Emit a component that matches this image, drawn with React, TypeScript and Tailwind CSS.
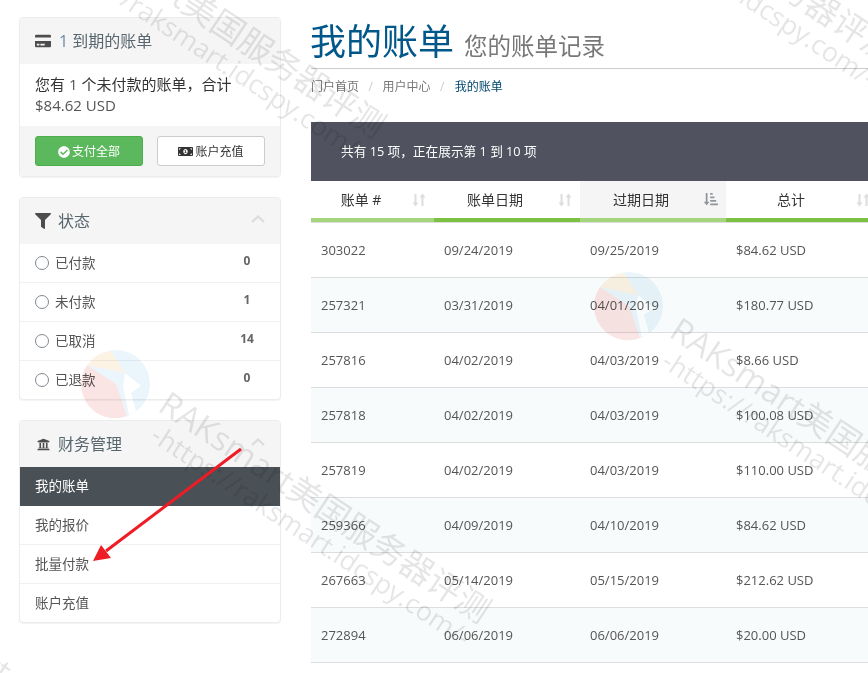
import { FaCreditCard, FaFilter, FaUniversity, FaCheckCircle, FaMoneyBillAlt, FaSortAmountDownAlt } from "react-icons/fa";

const font = "font-['Open_Sans','Noto_Sans_CJK_SC',sans-serif]";

function Chevron() {
  return (
    <svg width="14" height="8" viewBox="0 0 14 8" fill="none" stroke="#dcdcdc" strokeWidth="2.2">
      <path d="M1 7 L7 1.5 L13 7" />
    </svg>
  );
}

function SortIdle() {
  return (
    <svg width="14" height="14" viewBox="0 0 14 14" fill="#dddddd">
      <path d="M2.500 1h2v8.500h2L3.500 13.500 0.500 9.500h2z" />
      <path d="M9.500 13h2V4.500h2L10.500 .5 7.500 4.500h2z" />
    </svg>
  );
}

function Heading({ icon, title, chevron }: { icon: React.ReactNode; title: React.ReactNode; chevron?: boolean }) {
  return (
    <div className="flex items-center h-[46px] bg-[#f5f5f5] pl-[15px] pr-[15px] rounded-t-[3px]">
      <span className="w-[16px] flex justify-center text-[#4d4d4d] text-[16px] mr-[7px]">{icon}</span>
      <span className="text-[16px] text-[#58666e]">{title}</span>
      {chevron && <span className="ml-auto mb-[4px] flex"><Chevron /></span>}
    </div>
  );
}

function StatusRow({ label, count, last }: { label: string; count: string; last?: boolean }) {
  return (
    <div className={`flex items-center pl-[15px] text-[13.500px] text-[#555] ${last ? "h-[38px]" : "h-[39px] border-b border-[#f1f1f1]"}`}>
      <span className="w-[14px] h-[14px] rounded-full border-[1.500px] border-[#808890] mr-[6px]" />
      <span>{label}</span>
      <span className="ml-auto w-[56px] mb-[5px] pr-[10px] text-[12px] font-bold text-[#666] text-center">{count}</span>
    </div>
  );
}

const rows = [
  ["303022", "09/24/2019", "09/25/2019", "$84.62 USD"],
  ["257321", "03/31/2019", "04/01/2019", "$180.77 USD"],
  ["257816", "04/02/2019", "04/03/2019", "$8.66 USD"],
  ["257818", "04/02/2019", "04/03/2019", "$100.08 USD"],
  ["257819", "04/02/2019", "04/03/2019", "$110.00 USD"],
  ["259366", "04/09/2019", "04/10/2019", "$84.62 USD"],
  ["267663", "05/14/2019", "05/15/2019", "$212.62 USD"],
  ["272894", "06/06/2019", "06/06/2019", "$20.00 USD"],
];

function Logo({ className }: { className: string }) {
  return (
    <svg className={className} width="70" height="70" viewBox="0 0 70 70">
      <circle cx="35" cy="35" r="34" fill="#e9f5fc" />
      <path d="M35 35 L6 16 A34 34 0 0 0 46 67 Z" fill="#fbe3e1" />
      <path d="M6 16 A34 34 0 0 1 30 2 L44 24 Z" fill="#fdf2e1" />
      <path d="M44 24 L60 37 L50 44 L55 62 A34 34 0 0 1 48 66 L42 38 Z" fill="#ffffff" />
    </svg>
  );
}

function Mark({ x, y, top, bottom }: { x: number; y: number; top: string; bottom?: string }) {
  return (
    <div
      className="absolute origin-top-left rotate-[33.500deg] whitespace-nowrap pointer-events-none text-[#000]/10"
      style={{ left: x, top: y }}
    >
      <div className="text-[33.500px] leading-[34px] font-['Open_Sans','Noto_Sans_CJK_SC',sans-serif]">{top}</div>
      {bottom && <div className="text-[26.700px] leading-[30px] font-['Open_Sans',sans-serif] ml-[10px]">{bottom}</div>}
    </div>
  );
}

const wmTop = "RAKsmart美国服务器评测";
const wmBottom = "-https://raksmart.idcspy.com/-";

const cell = "border-b border-[#ddd] pl-[10px] pt-[2px]";

export default function App() {
  return (
    <div className={`relative w-[868px] h-[673px] overflow-hidden bg-white flex pl-[19px] pt-[17px] ${font}`}>
      <aside className="w-[262px] shrink-0 mr-[30px] flex flex-col gap-[20px]">
        <section className="border border-[#ececec] rounded-[4px] shadow-[0_1px_1px_rgba(0,0,0,0.05)] h-[160px] flex flex-col">
          <Heading icon={<FaCreditCard />} title={<><span className="ml-[1px] text-[#6a8ba5]">1</span> 到期的账单</>} />
          <div className="px-[15px] pt-[10px] h-[62px] bg-white text-[15px] leading-[21px] text-[#333]">
            您有 <span className="text-[#555]">1</span> 个未付款的账单，合计<br />
            <span className="text-[#555]">$84.62 USD</span>
          </div>
          <div className="flex-1 bg-[#f5f5f5] px-[15px] flex justify-between pt-[10px] rounded-b-[4px]">
            <button className="w-[108px] h-[30px] pt-[1px] rounded-[3px] bg-[#5cb85c] border border-[#4cae4c] text-white text-[12px] flex items-center justify-center gap-[2px]">
              <FaCheckCircle className="text-[12px]" />支付全部
            </button>
            <button className="w-[108px] h-[30px] pt-[1px] rounded-[3px] bg-white border border-[#ccc] text-[#333] text-[12px] flex items-center justify-center gap-[2px]">
              <FaMoneyBillAlt className="text-[15px]" />账户充值
            </button>
          </div>
        </section>

        <section className="border border-[#ececec] rounded-[4px] shadow-[0_1px_1px_rgba(0,0,0,0.05)] bg-white">
          <Heading icon={<FaFilter />} title="状态" chevron />
          <StatusRow label="已付款" count="0" />
          <StatusRow label="未付款" count="1" />
          <StatusRow label="已取消" count="14" />
          <StatusRow label="已退款" count="0" last />
        </section>

        <section className="border border-[#ececec] rounded-[4px] shadow-[0_1px_1px_rgba(0,0,0,0.05)] bg-white">
          <Heading icon={<FaUniversity className="text-[13px]" />} title="财务管理" chevron />
          <div className="h-[39px] flex items-center px-[15px] pb-[1px] bg-[#4a5156] text-white text-[13.500px]">我的账单</div>
          <div className="h-[39px] flex items-center px-[15px] border-b border-[#f1f1f1] text-[#555] text-[13.500px]">我的报价</div>
          <div className="h-[39px] flex items-center px-[15px] border-b border-[#f1f1f1] text-[#555] text-[13.500px]">批量付款</div>
          <div className="h-[38px] flex items-center px-[15px] text-[#555] text-[13.500px]">账户充值</div>
        </section>
      </aside>

      <main className="w-[600px] shrink-0">
        <div className="h-[51px] border-b border-[#ccc] flex items-baseline box-content">
          <h1 className="text-[36px] leading-[50px] text-[#00588a] -ml-[1px]">我的账单</h1>
          <span className="ml-[10px] text-[23.500px] text-[#777]">您的账单记录</span>
        </div>
        <div className="flex items-center h-[36px] text-[12px] text-[#777]">
          <span>门户首页</span>
          <span className="mx-[9.500px] text-[#ccc]">/</span>
          <span>用户中心</span>
          <span className="mx-[9.500px] text-[#ccc]">/</span>
          <span className="ml-[1px] text-[#00466e]">我的账单</span>
        </div>
        <div className="mt-[17px] h-[59px] bg-[#50535f] flex items-center pl-[30px] text-[12.700px] text-white">
          共有 15 项，正在展示第 1 到 10 项
        </div>
        <table className="table-fixed w-[567px] border-separate border-spacing-0">
          <colgroup>
            <col className="w-[123px]" />
            <col className="w-[146px]" />
            <col className="w-[146px]" />
            <col className="w-[152px]" />
          </colgroup>
          <thead>
            <tr className="text-[14px] text-[#333] font-normal">
              <th className="relative h-[41px] font-normal border-b-4 border-[#a5d57d] pr-[23px]">
                账单 #<span className="absolute right-[8px] top-[12px] flex"><SortIdle /></span>
              </th>
              <th className="relative font-normal border-b-4 border-[#7cc142] pr-[24px]">
                账单日期<span className="absolute right-[8px] top-[12px] flex"><SortIdle /></span>
              </th>
              <th className="relative font-normal bg-[#f5f5f5] border-b-4 border-[#a5d57d] pr-[24px]">
                过期日期<span className="absolute right-[8px] top-[11px] text-[#8f959b] text-[14px] flex"><FaSortAmountDownAlt /></span>
              </th>
              <th className="relative font-normal border-b-4 border-[#7cc142] pr-[22px]">
                总计<span className="absolute right-[8px] top-[12px] flex"><SortIdle /></span>
              </th>
            </tr>
            <tr>
              <td colSpan={4} className="h-[1px] p-0 bg-[#ddd]" />
            </tr>
          </thead>
          <tbody>
            {rows.map((r, i) => (
              <tr key={r[0]} className={`h-[55px] text-[13px] text-[#555] ${i % 2 ? "bg-[#f8fbfb]" : "bg-white"}`}>
                {r.map((c, j) => (
                  <td key={j} className={cell}>{c}</td>
                ))}
              </tr>
            ))}
          </tbody>
        </table>
      </main>

      <Logo className="absolute left-[81px] top-[349px] pointer-events-none opacity-90 mix-blend-multiply" />
      <Logo className="absolute left-[594px] top-[271px] pointer-events-none opacity-90 mix-blend-multiply" />
      <Mark x={173} y={385} top={wmTop} bottom={wmBottom} />
      <Mark x={684} y={311} top={wmTop} bottom={wmBottom} />
      <Mark x={68} y={-100} top={wmTop} bottom={wmBottom} />
      <Mark x={579} y={-174} top={wmTop} bottom={wmBottom} />
      <Mark x={-110} y={575} top="RAKsmart" />

      <svg className="absolute left-0 top-0 pointer-events-none" width="868" height="673" viewBox="0 0 868 673">
        <line x1="241" y1="449" x2="106" y2="551" stroke="#ee1c25" strokeWidth="3" />
        <path d="M93 561 L101 545 L111 558 Z" fill="#ee1c25" />
      </svg>
    </div>
  );
}
